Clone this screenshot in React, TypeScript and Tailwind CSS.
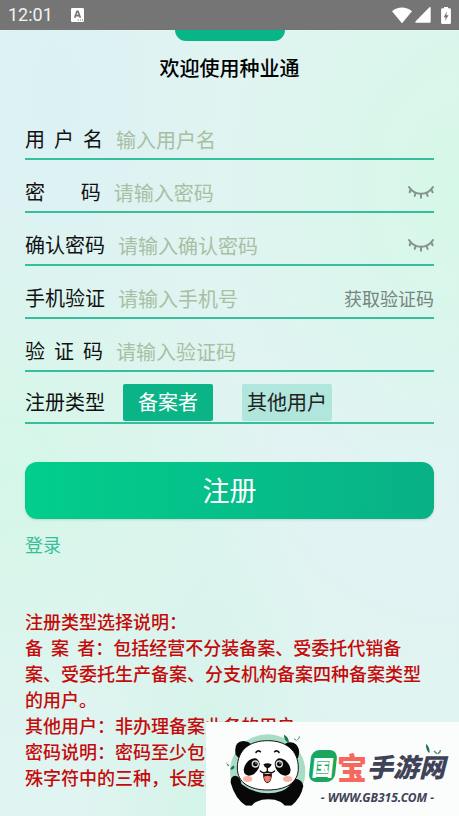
import { useState } from 'react';
import type { ReactNode } from 'react';

const LashIcon = () => (
  <svg viewBox="0 0 78 42" className="h-[14px] w-[26px]" fill="none" stroke="#87938f" strokeWidth="6" strokeLinecap="round">
    <path d="M3 6C20 33 58 33 75 6" />
    <path d="M8 13L5 22M23 23L20 33M39 28V38M55 23L59 33M70 13L74 22" />
  </svg>
);

const StatusBar = () => (
  <header className="flex h-[30px] items-center justify-between bg-[#757575] px-2 text-white">
    <div className="flex items-center gap-[18px]">
      <span className="font-[Roboto,sans-serif] text-lg leading-none text-[#f2f2f2]">12:01</span>
      <svg viewBox="0 0 39 42" className="h-[14px] w-[13px]">
        <rect width="39" height="42" rx="4" fill="#fff" />
        <path d="M11 29L18 10H21L28 29M14 23H25" fill="none" stroke="#757575" strokeWidth="5" />
        <path d="M20 36H24M27 36H30M33 36H36" stroke="#757575" strokeWidth="3" />
      </svg>
    </div>
    <div className="flex items-center">
      <svg viewBox="0 0 60 50" className="h-[17px] w-5" fill="#fff">
        <path d="M0 12C17-3 43-3 60 12L32 46Q30 49 28 46Z" />
      </svg>
      <svg viewBox="0 0 48 48" className="ml-[3px] h-4 w-4" fill="#fff">
        <path d="M44 0Q47-1 47 3V44Q47 47 44 47H3Q-1 47 2 43Z" />
      </svg>
      <svg viewBox="0 0 30 52" className="ml-[10px] h-[17px] w-[10px]">
        <path d="M9 0H21V4H26Q30 4 30 8V48Q30 52 26 52H4Q0 52 0 48V8Q0 4 4 4H9Z" fill="#fff" />
        <path d="M18 13L8 31H14L12 43L23 25H16Z" fill="#757575" />
      </svg>
    </div>
  </header>
);

interface FieldProps {
  id: string;
  label: string;
  placeholder: string;
  type?: string;
  children?: ReactNode;
}

const Field = ({ id, label, placeholder, type = 'text', children }: FieldProps) => (
  <div className="flex h-[53px] items-end border-b-2 border-[#35bf9d]">
    <div className="flex h-[38px] w-full items-center">
      <label htmlFor={id} className="shrink-0 whitespace-pre text-xl text-[#111]">
        {label}
      </label>
      <input
        id={id}
        type={type}
        placeholder={placeholder}
        className="ml-[13px] h-9 min-w-0 flex-1 bg-transparent text-xl text-[#111] outline-none placeholder:text-[#a9bfa4]"
      />
      {children}
    </div>
  </div>
);

const PasswordField = (props: FieldProps) => {
  const [visible, setVisible] = useState(false);
  return (
    <Field {...props} type={visible ? 'text' : 'password'}>
      <button type="button" aria-label="显示密码" onClick={() => setVisible(!visible)}>
        <LashIcon />
      </button>
    </Field>
  );
};

const Panda = () => (
  <svg viewBox="75 60 249 225" className="h-[75px] w-[83px] shrink-0">
    <circle cx="203" cy="180" r="113" fill="#a9dcc4" />
    <path d="M107 128Q100 88 130 87Q150 88 158 104L120 142ZM248 104Q258 86 280 92Q305 104 294 138L282 144Z" fill="#080808" />
    <path d="M92 212Q91 192 106 191Q121 192 124 216Q160 244 205 244Q248 244 268 222Q266 202 286 200Q307 202 310 222Q303 258 274 281H138Q105 260 92 212Z" fill="#080808" />
    <path d="M135 281H275V286H135Z" fill="#fbfcfc" />
    <ellipse cx="205" cy="287" rx="50" ry="25" fill="#fbfcfc" />
    <path d="M112 168C112 112 150 86 203 86C257 86 295 114 295 168C295 213 257 234 203 234C151 234 112 213 112 168Z" fill="#fff" stroke="#111" strokeWidth="3" />
    <ellipse cx="155" cy="165" rx="20" ry="29" transform="rotate(38 155 165)" fill="#080808" />
    <ellipse cx="248" cy="165" rx="20" ry="29" transform="rotate(-38 248 165)" fill="#080808" />
    <circle cx="166" cy="156" r="11" fill="#d9d9d9" />
    <circle cx="238" cy="156" r="11" fill="#d9d9d9" />
    <circle cx="166" cy="156" r="7" fill="#080808" />
    <circle cx="238" cy="156" r="7" fill="#080808" />
    <circle cx="168" cy="153" r="2" fill="#fff" />
    <circle cx="240" cy="153" r="2" fill="#fff" />
    <path d="M168 121Q174 114 181 119M224 119Q231 114 237 121" fill="none" stroke="#111" strokeWidth="5" strokeLinecap="round" />
    <ellipse cx="143" cy="201" rx="14" ry="9" fill="#f7b5a5" />
    <ellipse cx="263" cy="201" rx="14" ry="9" fill="#f7b5a5" />
    <path d="M190 157Q202 151 215 157Q211 168 202 169Q193 167 190 157Z" fill="#111" />
    <path d="M202 168V178Q191 187 181 177M202 178Q213 187 224 177" fill="none" stroke="#111" strokeWidth="4" strokeLinecap="round" />
    <path d="M189 184Q202 187 216 184Q216 211 202 214Q189 211 189 184Z" fill="#2b0c0c" />
    <path d="M192 194Q202 188 213 194Q212 208 202 211Q193 208 192 194Z" fill="#f07b70" />
    <path d="M252 68Q268 76 266 92Q252 86 252 68ZM94 166Q104 154 103 168Q95 176 91 171ZM78 151L88 161L84 163Z" fill="#1c7550" />
    <path d="M282 80L290 86M292 83Q299 80 298 73" stroke="#4d8a70" strokeWidth="3" fill="none" />
  </svg>
);

const SiteBadge = () => (
  <aside className="absolute bottom-0 right-0 flex h-[94px] w-[253px] items-center bg-[#fbfcfc] pl-[19px] font-['Noto_Sans_CJK_SC',sans-serif]">
    <Panda />
    <div className="flex flex-col items-center gap-[6px] pl-[2px] pt-4">
      <div className="flex h-9 items-center font-black leading-none text-[#3f4358]">
        <span className="mr-px flex h-8 w-[26px] -skew-x-6 items-center justify-center rounded-lg bg-[#18a75d] text-[22px] text-white">
          国
        </span>
        <span className="text-[30px] text-[#f7685c]">宝</span>
        <span className="text-[26px] italic">手游网</span>
      </div>
      <p className="font-['Noto_Sans',sans-serif] text-xs font-bold italic leading-4 text-[#3f4358]">- WWW.GB315.COM -</p>
    </div>
    <svg viewBox="0 0 48 36" className="absolute right-[18px] top-[21px] h-3 w-4">
      <path d="M3 2Q16 14 13 30Q2 22 3 2Z" fill="#1c7550" />
      <path d="M27 24L36 32M38 32Q46 29 46 21" stroke="#4d8a70" strokeWidth="4" fill="none" />
    </svg>
  </aside>
);

const userTypes = ['备案者', '其他用户'];

export default function App() {
  const [userType, setUserType] = useState(userTypes[0]);

  return (
    <div className="relative min-h-screen overflow-hidden bg-[#e0f4f1] bg-[radial-gradient(ellipse_at_100%_23%,#d6f8e8_0%,transparent_36%),radial-gradient(ellipse_at_0%_58%,#d5f7e8_0%,transparent_40%),radial-gradient(ellipse_at_12%_11%,#dcf1f4_0%,transparent_30%),radial-gradient(ellipse_at_95%_55%,#e2f3f5_0%,transparent_40%),radial-gradient(ellipse_at_45%_100%,#d4f4e9_0%,transparent_35%)] font-['Noto_Sans_CJK_SC',sans-serif]">
      <StatusBar />
      <main className="px-[25px]">
        <div className="mx-auto h-[11px] w-[110px] rounded-b-[20px] bg-[#07b588]" />
        <h1 className="mt-3 text-center text-xl font-medium leading-[30px] text-black">欢迎使用种业通</h1>

        <form className="mt-6" onSubmit={(e) => e.preventDefault()}>
          <Field id="username" label="用  户  名" placeholder="输入用户名" />
          <PasswordField id="password" label="密        码" placeholder="请输入密码" />
          <PasswordField id="confirm" label="确认密码" placeholder="请输入确认密码" />
          <Field id="phone" label="手机验证" placeholder="请输入手机号" type="tel">
            <button type="button" className="shrink-0 text-lg text-[#76857f]">
              获取验证码
            </button>
          </Field>
          <Field id="code" label="验  证  码" placeholder="请输入验证码" />
          <div role="group" aria-labelledby="type-label" className="flex h-[52px] items-end border-b-2 border-[#35bf9d]">
            <div className="flex h-10 items-center">
              <span id="type-label" className="text-xl text-[#111]">
                注册类型
              </span>
              <div className="ml-[18px] flex gap-[29px]">
                {userTypes.map((type) => (
                  <button
                    key={type}
                    type="button"
                    aria-pressed={userType === type}
                    onClick={() => setUserType(type)}
                    className={`h-[37px] w-[90px] rounded-xs text-xl ${
                      userType === type ? 'bg-[#0bb487] text-white' : 'bg-[#b1e6dd] text-[#222]'
                    }`}
                  >
                    {type}
                  </button>
                ))}
              </div>
            </div>
          </div>
          <button
            type="submit"
            className="mt-[38px] h-[57px] w-full rounded-xl bg-linear-to-r from-[#02ce8c] to-[#08b186] text-[27px] text-white shadow"
          >
            注册
          </button>
        </form>
        <a href="#login" className="mt-[13px] inline-block text-lg leading-6 text-[#38be98]">
          登录
        </a>

        <section className="mt-[51px] whitespace-pre-wrap text-lg font-medium leading-[26px] text-[#c50a0a]">
          <p>注册类型选择说明：</p>
          <p>备  案  者：包括经营不分装备案、受委托代销备案、受委托生产备案、分支机构备案四种备案类型的用户。</p>
          <p>其他用户：非办理备案业务的用户。</p>
          <p>密码说明：密码至少包含大小写字母、数字以及特殊字符中的三种，长度至少八位。</p>
        </section>
      </main>
      <SiteBadge />
    </div>
  );
}
